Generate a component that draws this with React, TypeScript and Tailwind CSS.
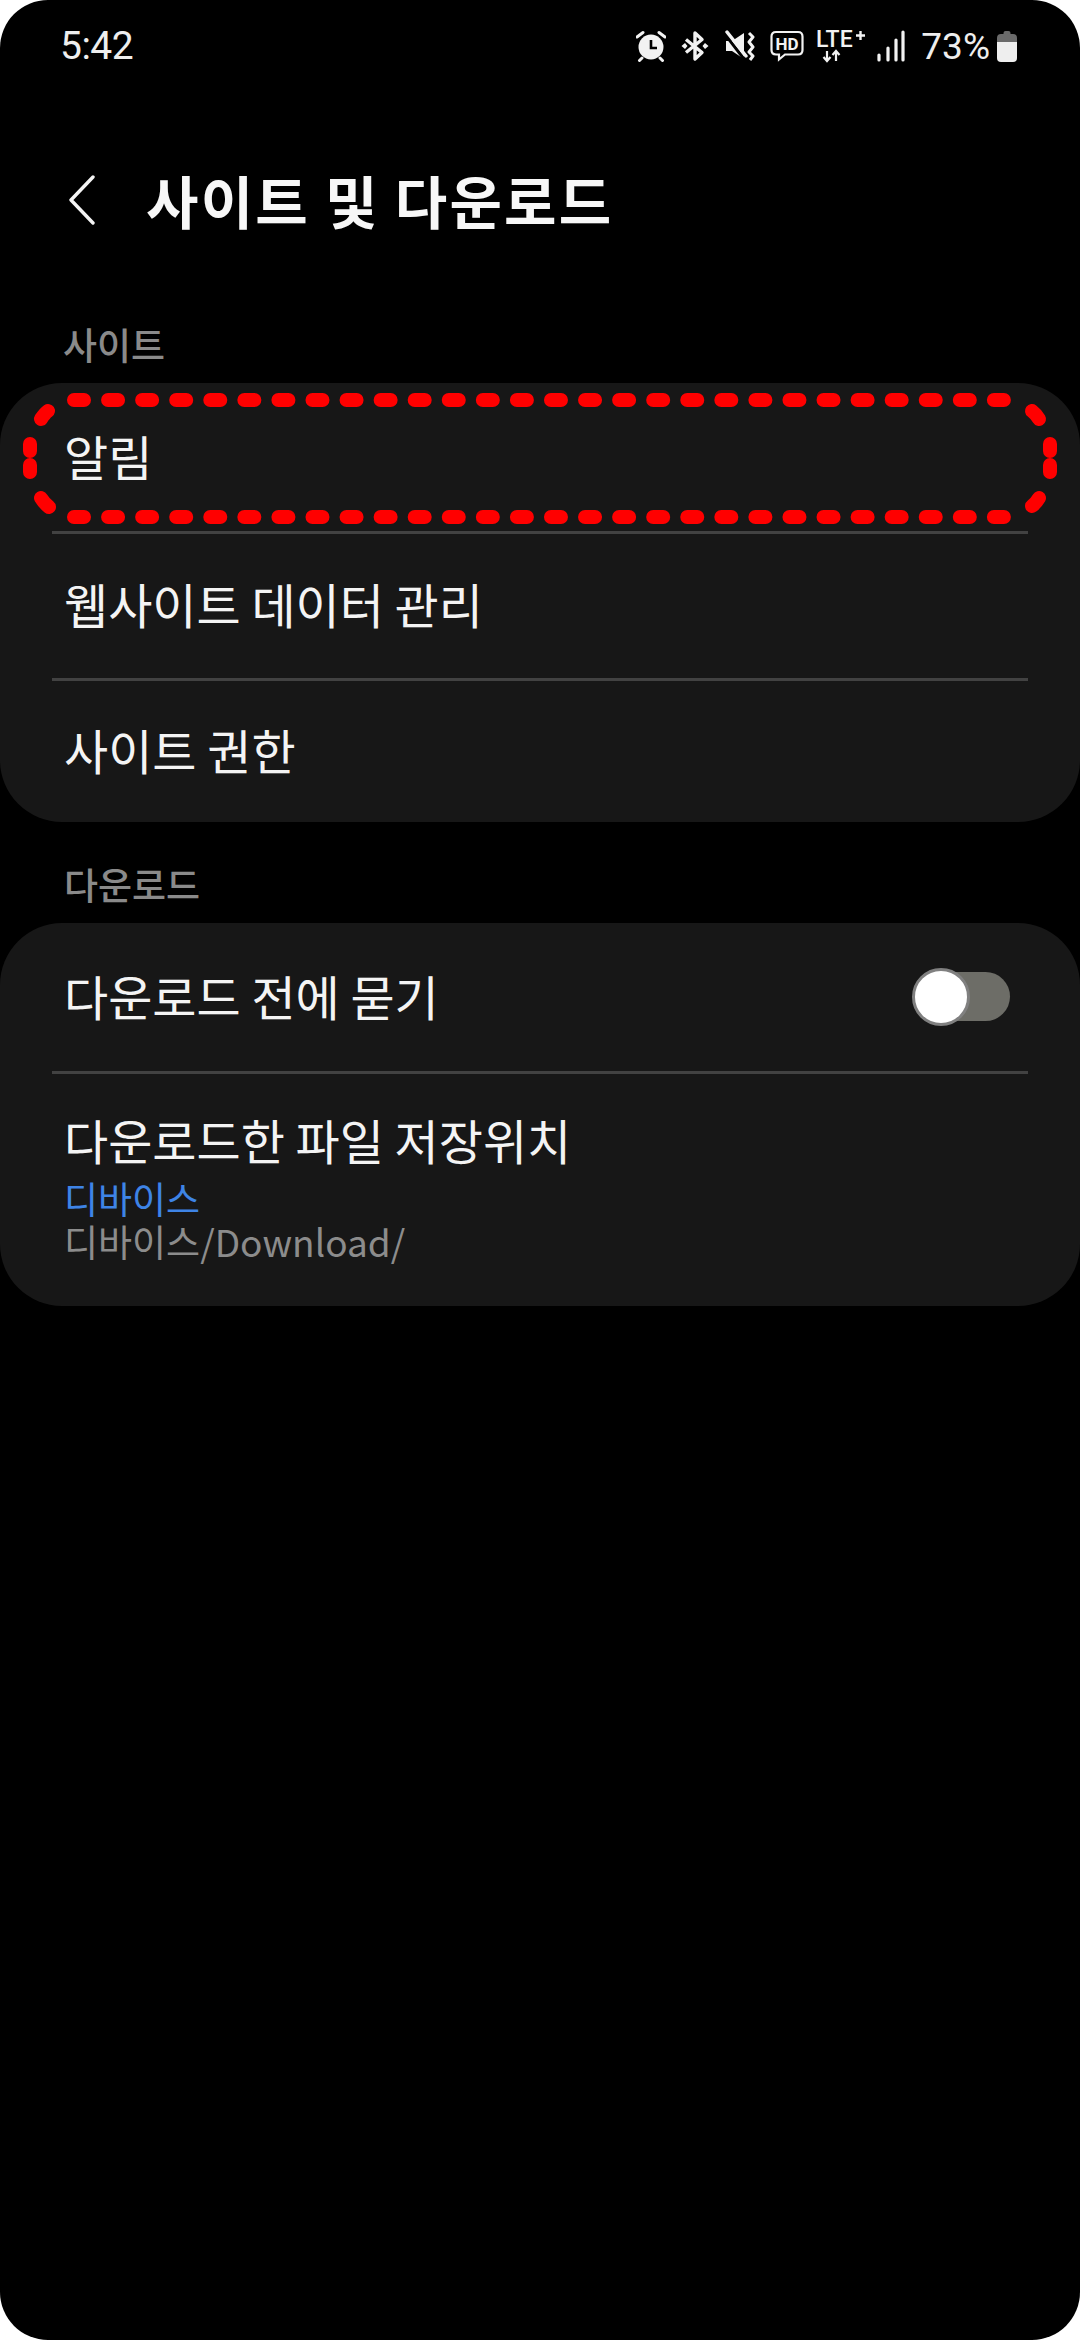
const font = "font-['Noto_Sans_CJK_KR','Noto_Sans',sans-serif]";

function Alarm() {
  return (
    <svg width="30" height="32" viewBox="0 0 30 32" className="block">
      <circle cx="15" cy="17" r="12.5" fill="#f2f2f2" />
      <path d="M1 7 L7 2.5 M29 7 L23 2.5" stroke="#f2f2f2" strokeWidth="3" strokeLinecap="round" />
      <path d="M6 28 L3.5 30.5 M24 28 L26.5 30.5" stroke="#f2f2f2" strokeWidth="3" strokeLinecap="round" />
      <path d="M15 10 V18 H21" stroke="#000" strokeWidth="2.6" fill="none" />
    </svg>
  );
}
function Bluetooth() {
  return (
    <svg width="28" height="32" viewBox="0 0 28 32" className="block">
      <path d="M5 9.5 L21 22.5 L14 29 V3 L21 9.5 L5 22.5" stroke="#f2f2f2" strokeWidth="3.4" fill="none" strokeLinejoin="round" />
      <path d="M0.5 16 L4 13 L6.5 16 L4 19 Z M27.5 16 L24 13 L21.5 16 L24 19 Z" fill="#f2f2f2" />
    </svg>
  );
}
function Mute() {
  return (
    <svg width="30" height="32" viewBox="0 0 30 32" className="block">
      <path d="M1 11 H7 L19 3 V29 L7 21 H1 Z" fill="#f2f2f2" />
      <path d="M-1 3 L19 29" stroke="#000" strokeWidth="3" />
      <path d="M2 2 L21 26" stroke="#f2f2f2" strokeWidth="3.4" strokeLinecap="round" />
      <path d="M24 3 L28 7 L24 12 L28 17 L24 22 L28 26 L25 30" stroke="#f2f2f2" strokeWidth="3" fill="none" strokeLinejoin="round" />
    </svg>
  );
}
function Hd() {
  return (
    <svg width="34" height="32" viewBox="0 0 34 32" className="block">
      <path d="M6 2 H28 Q32.5 2 32.5 6.5 V20 Q32.5 24.5 28 24.5 H15 L9 29.5 V24.5 H6 Q1.5 24.5 1.5 20 V6.5 Q1.5 2 6 2 Z" stroke="#f2f2f2" strokeWidth="2.2" fill="none" />
      <text x="17" y="20" textAnchor="middle" fontFamily="Roboto, sans-serif" fontWeight="700" fontSize="17" fill="#f2f2f2">HD</text>
    </svg>
  );
}
function Lte() {
  return (
    <svg width="50" height="42" viewBox="0 -4 50 42" className="block">
      <text x="0" y="18" fontFamily="Roboto, sans-serif" fontWeight="500" fontSize="23" fill="#f2f2f2">LTE</text>
      <path d="M40 6.5 H49 M44.5 2 V11" stroke="#f2f2f2" strokeWidth="2.4" />
      <path d="M11 22 V32 M7.5 28 L11 32 L14.5 28" stroke="#f2f2f2" strokeWidth="2.2" fill="none" />
      <path d="M20 32 V22 M16.5 26 L20 22 L23.5 26" stroke="#f2f2f2" strokeWidth="2.2" fill="none" />
    </svg>
  );
}
function Signal() {
  return (
    <svg width="28" height="32" viewBox="0 0 28 32" className="block">
      <path d="M2 25 V30 M11 18 V30 M19 10 V30 M26 2 V30" stroke="#f2f2f2" strokeWidth="3.2" strokeLinecap="round" />
    </svg>
  );
}
function Battery() {
  return (
    <svg width="22" height="32" viewBox="0 0 22 32" className="block">
      <path d="M7.5 3 Q7.5 1 9.5 1 H12.5 Q14.5 1 14.5 3 V4 H17 Q21 4 21 8 V12 H1 V8 Q1 4 5 4 H7.5 Z" fill="#6a6a6a" />
      <path d="M1 12 H21 V28 Q21 32 17 32 H5 Q1 32 1 28 Z" fill="#eeeeee" />
    </svg>
  );
}

function Divider() {
  return <div className="mx-[52px] h-[3px] bg-[#424242]" />;
}

function Highlight() {
  return (
    <svg width="1080" height="170" viewBox="0 0 1080 170" className="absolute left-0 top-0 pointer-events-none">
      <g stroke="#ff0000" strokeWidth="14" strokeLinecap="round" fill="none">
        <path d="M74 17 H1006" strokeDasharray="10 24.07" />
        <path d="M74 134 H1006" strokeDasharray="10 24.07" />
        <path d="M48 28 Q45 30 41 36" />
        <path d="M41 115 Q44 120 49 124" />
        <path d="M30 61 V68 M30 82 V89" />
        <path d="M1032 28 Q1036 31 1039 36" />
        <path d="M1039 115 Q1036 120 1032 123" />
        <path d="M1050 61 V68 M1050 82 V89" />
      </g>
    </svg>
  );
}

export default function App() {
  return (
    <div className="w-[1080px] h-[2340px] bg-white">
      <div className={`w-full h-full bg-black rounded-[48px] overflow-hidden flex flex-col ${font}`}>
        <div className="h-[92px] pl-[60px] pr-[62px] flex items-center justify-between">
          <span className="font-['Roboto'] text-[39px] leading-none text-[#eeeeee] tracking-[-0.5px]">5:42</span>
          <div className="flex items-center">
            <Alarm />
            <div className="ml-[15px]"><Bluetooth /></div>
            <div className="ml-[16px]"><Mute /></div>
            <div className="ml-[15px]"><Hd /></div>
            <div className="ml-[12px]"><Lte /></div>
            <div className="ml-[11px]"><Signal /></div>
            <span className="ml-[16px] font-['Roboto'] text-[37px] leading-none text-[#eeeeee]">73%</span>
            <div className="ml-[6px]"><Battery /></div>
          </div>
        </div>

        <div className="mt-[69px] h-[78px] pl-[68px] flex items-center">
          <svg width="28" height="50" viewBox="0 0 28 50" className="block">
            <path d="M25 2 L3 25 L25 48" stroke="#f4f4f4" strokeWidth="3.4" fill="none" strokeLinecap="round" strokeLinejoin="round" />
          </svg>
          <h1 className="ml-[50px] pb-[2px] text-[57px] leading-none font-bold text-[#f7f7f7] tracking-[2.2px]">사이트 및 다운로드</h1>
        </div>

        <div className="mt-[87px] h-[38px] pl-[63px] pb-[2px] flex items-center text-[37px] leading-none font-medium text-[#8a8a8a]">사이트</div>

        <div className="relative mt-[19px] bg-[#171717] rounded-[62px] h-[439px]">
          <Highlight />
          <div className="h-[148px] pl-[64px] pb-[5px] flex items-center text-[48px] text-[#f4f4f4] leading-none">알림</div>
          <Divider />
          <div className="h-[144px] pl-[64px] pb-[7px] flex items-center text-[48px] text-[#f4f4f4] leading-none">웹사이트 데이터 관리</div>
          <Divider />
          <div className="h-[141px] pl-[64px] pb-[5px] flex items-center text-[48px] text-[#f4f4f4] leading-none">사이트 권한</div>
        </div>

        <div className="mt-[44px] h-[38px] pl-[64px] pb-[2px] flex items-center text-[37px] leading-none font-medium text-[#8a8a8a]">다운로드</div>

        <div className="mt-[19px] bg-[#171717] rounded-[62px] h-[383px]">
          <div className="h-[148px] pl-[64px] pr-[70px] flex items-center justify-between text-[48px] text-[#f4f4f4] leading-none">
            <span className="mb-[5px]">다운로드 전에 묻기</span>
            <span className="relative block w-[96px] h-[49px] mb-[2px] rounded-full bg-[#6d6d67]">
              <span className="absolute left-[-2px] top-[-4px] w-[58px] h-[58px] rounded-full bg-white border-[3px] border-[#808080]" />
            </span>
          </div>
          <Divider />
          <div className="pl-[64px] pt-[37px] flex flex-col items-start">
            <span className="text-[48px] leading-[56px] text-[#f4f4f4]">다운로드한 파일 저장위치</span>
            <span className="mt-[11px] text-[37px] leading-[41px] text-[#3e84e6]">디바이스</span>
            <span className="text-[37px] leading-[44px] text-[#8c8c8c]">디바이스/Download/</span>
          </div>
        </div>
      </div>
    </div>
  );
}
